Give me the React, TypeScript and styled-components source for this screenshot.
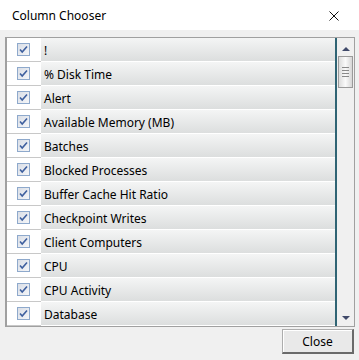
import styled, { createGlobalStyle } from "styled-components";

const GlobalStyle = createGlobalStyle`
  html, body {
    margin: 0;
    padding: 0;
    background: #f0f0f0;
  }
  body {
    font-family: "Noto Sans", "Open Sans", sans-serif;
  }
`;

const Window = styled.div`
  width: 359px;
  height: 360px;
  display: flex;
  flex-direction: column;
  background: #f0f0f0;
  overflow: hidden;
`;

const TitleBar = styled.div`
  height: 30px;
  background: #ffffff;
  display: flex;
  align-items: center;
  justify-content: space-between;
  padding: 1px 20px 0 12px;
  box-sizing: border-box;
  font-size: 12px;
  color: #000;
`;

const Body = styled.div`
  flex: 1;
  display: flex;
  flex-direction: column;
  padding: 7px 4px 0 5px;
`;

const Grid = styled.div`
  height: 290px;
  display: flex;
  border: 1px solid #a0a0a0;
  border-left-width: 2px;
  background: #ffffff;
  box-sizing: border-box;
`;

const Rows = styled.div`
  flex: 1;
  display: flex;
  flex-direction: column;
  overflow: hidden;
  border-right: 2px solid #2f6474;
`;

const Row = styled.div`
  height: 24px;
  flex: 0 0 24px;
  display: flex;
`;

const CheckCell = styled.div`
  width: 34px;
  display: flex;
  align-items: center;
  justify-content: center;
  padding-right: 1px;
  background: #fff;
  border-bottom: 1px solid #c8c8c8;
  box-sizing: border-box;
`;

const TextCell = styled.div`
  flex: 1;
  display: flex;
  align-items: center;
  padding: 2px 0 0 3px;
  font-size: 12px;
  color: #000;
  background: linear-gradient(#f4f5f5, #dcdede);
  border-bottom: 1px solid #ffffff;
  box-sizing: border-box;
`;

const ScrollBar = styled.div`
  width: 17px;
  display: flex;
  flex-direction: column;
  align-items: center;
  background: #f0f0f0;
  padding-top: 9px;
  box-sizing: border-box;
`;

const Arrow = styled.div<{ $down?: boolean }>`
  width: 0;
  height: 0;
  border-left: 4px solid transparent;
  border-right: 4px solid transparent;
  ${p => p.$down ? "border-top: 4px solid #404a6a;" : "border-bottom: 4px solid #404a6a;"}
`;

const Thumb = styled.div`
  margin-top: 5px;
  width: 15px;
  height: 32px;
  box-sizing: border-box;
  border: 1px solid #9a9a9a;
  background: linear-gradient(90deg, #dcdcdc, #fafafa 50%, #d6d6d6);
  display: flex;
  flex-direction: column;
  align-items: center;
  justify-content: center;
  gap: 2px;
`;

const Grip = styled.span`
  width: 7px;
  height: 1px;
  background: #8a8a8a;
`;

const Track = styled.div`
  flex: 1;
`;

const BottomGap = styled.div`
  height: 6px;
`;

const Footer = styled.div`
  display: flex;
  justify-content: flex-end;
  padding-top: 2px;
  padding-right: 1px;
`;

const CloseButton = styled.button`
  width: 72px;
  height: 25px;
  font-family: "Noto Sans", "Open Sans", sans-serif;
  font-size: 12px;
  color: #000;
  background: #e9e9e9;
  border: 1px solid #adadad;
  border-right: 2px solid #6a6a6a;
  border-bottom: 2px solid #6a6a6a;
  box-shadow: inset 1px 1px 0 #fff;
  padding: 1px 0 0;
`;

const Check = () => (
  <svg width="13" height="13" viewBox="0 0 13 13">
    <defs>
      <linearGradient id="cb" x1="0" y1="0" x2="1" y2="1">
        <stop offset="0" stopColor="#d8dde6" />
        <stop offset="1" stopColor="#f6f7f9" />
      </linearGradient>
    </defs>
    <rect x="0.5" y="0.5" width="12" height="12" fill="url(#cb)" stroke="#8ea9cc" />
    <path d="M3 6.5 L5.2 9 L10 3.5" fill="none" stroke="#3e5f9e" strokeWidth="1.6" />
  </svg>
);

const CloseIcon = () => (
  <svg width="10" height="10" viewBox="0 0 10 10">
    <path d="M0.5 0.5 L9.5 9.5 M9.5 0.5 L0.5 9.5" stroke="#111" strokeWidth="1" />
  </svg>
);

const columns = [
  "!",
  "% Disk Time",
  "Alert",
  "Available Memory (MB)",
  "Batches",
  "Blocked Processes",
  "Buffer Cache Hit Ratio",
  "Checkpoint Writes",
  "Client Computers",
  "CPU",
  "CPU Activity",
  "Database",
];

const App = () => (
  <Window>
    <GlobalStyle />
    <TitleBar>
      <span>Column Chooser</span>
      <CloseIcon />
    </TitleBar>
    <Body>
      <Grid>
        <Rows>
          {columns.map(c => (
            <Row key={c}>
              <CheckCell><Check /></CheckCell>
              <TextCell>{c}</TextCell>
            </Row>
          ))}
        </Rows>
        <ScrollBar>
          <Arrow />
          <Thumb>
            <Grip /><Grip /><Grip /><Grip />
          </Thumb>
          <Track />
          <Arrow $down />
          <BottomGap />
        </ScrollBar>
      </Grid>
      <Footer>
        <CloseButton>Close</CloseButton>
      </Footer>
    </Body>
  </Window>
);

export default App;
